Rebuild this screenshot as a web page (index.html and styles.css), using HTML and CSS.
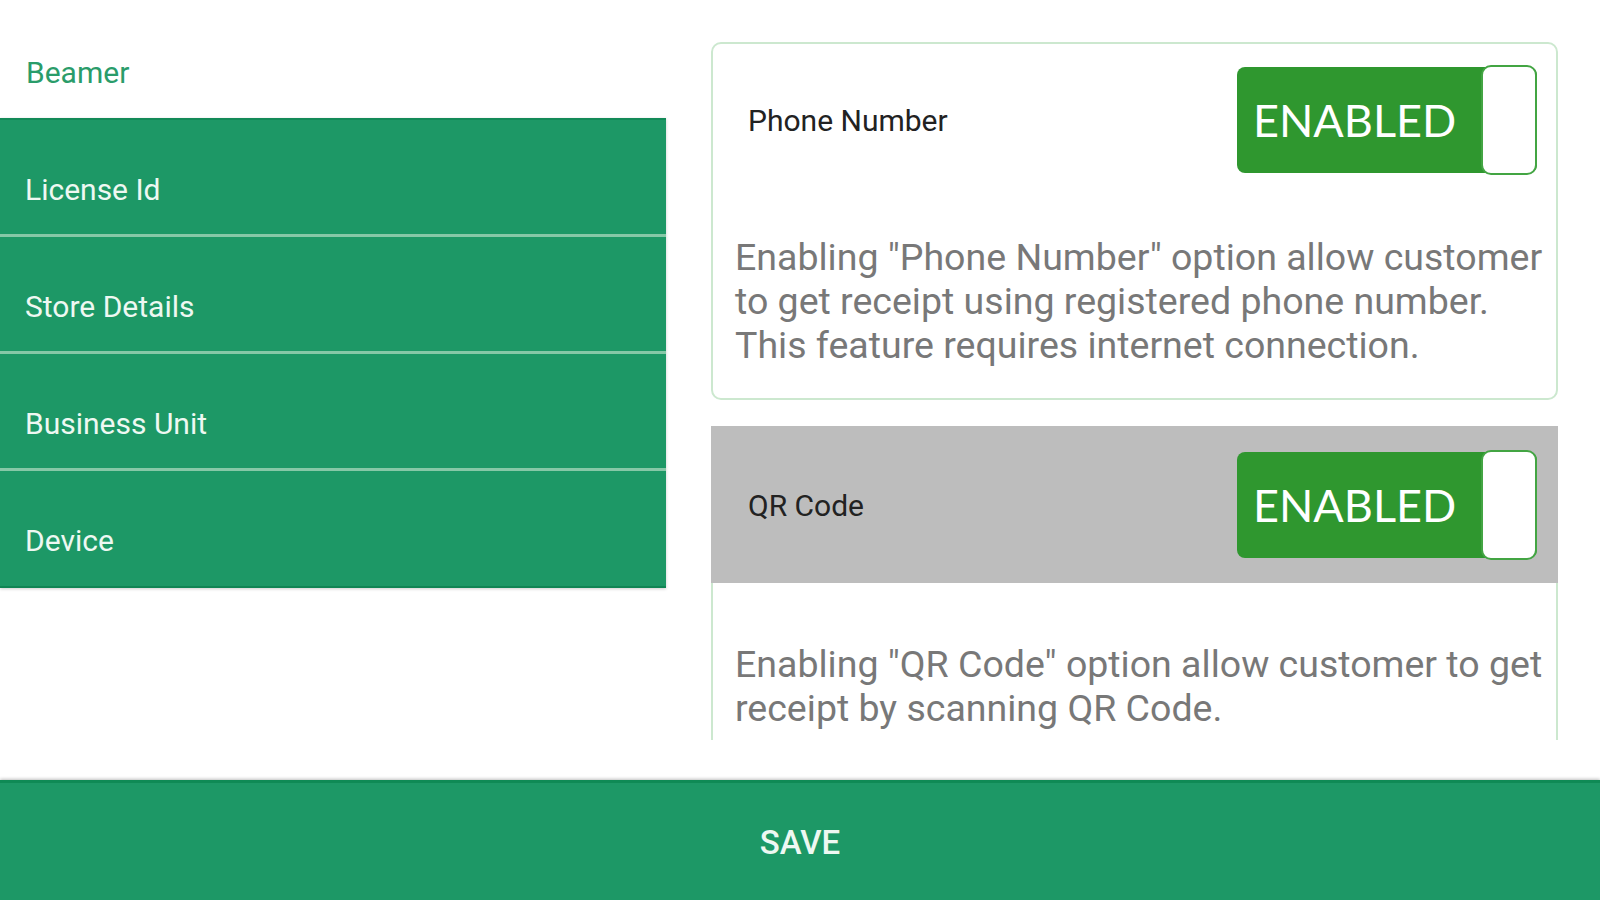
FILE: index.html
```html
<!DOCTYPE html>
<html lang="en">

<head>
  <meta charset="UTF-8" />
  <meta name="viewport" content="width=device-width, initial-scale=1.0" />
  <title>Beamer - Receipt Options</title>
  <link rel="stylesheet" href="styles.css">
</head>

<body>
  <div class="screen">
    <div class="main">
      <aside class="sidebar">
        <div class="brand">Beamer</div>
        <ul class="menu">
          <li>License Id</li>
          <li>Store Details</li>
          <li>Business Unit</li>
          <li>Device</li>
        </ul>
      </aside>

      <section class="options">
        <div class="option">
          <div class="option-head">
            <span class="option-name">Phone Number</span>
            <div class="toggle">
              <span class="toggle-label">ENABLED</span>
              <span class="toggle-knob"></span>
            </div>
          </div>
          <p class="option-desc">Enabling "Phone Number" option allow customer to get receipt using registered phone number. This feature requires internet connection.</p>
        </div>

        <div class="option option-active">
          <div class="option-head">
            <span class="option-name">QR Code</span>
            <div class="toggle">
              <span class="toggle-label">ENABLED</span>
              <span class="toggle-knob"></span>
            </div>
          </div>
          <p class="option-desc">Enabling "QR Code" option allow customer to get receipt by scanning QR Code.</p>
        </div>
      </section>
    </div>

    <footer class="save-bar">SAVE</footer>
  </div>
</body>

</html>
```

FILE: styles.css
```css
* {
  margin: 0;
  padding: 0;
  box-sizing: border-box;
}

html,
body {
  width: 1600px;
  height: 900px;
  overflow: hidden;
  background: #ffffff;
  font-family: Roboto, 'Noto Sans', sans-serif;
}

.screen {
  display: flex;
  flex-direction: column;
  height: 900px;
}

.main {
  display: flex;
  height: 780px;
}

/* left menu */

.sidebar {
  width: 666px;
  flex-shrink: 0;
}

.brand {
  height: 118px;
  padding: 55px 26px 0;
  font-size: 30px;
  line-height: 36px;
  color: #2a9c6a;
}

.menu {
  list-style: none;
  background-color: #1d9866;
  border-top: 2px solid #138a58;
  border-bottom: 2px solid #108554;
  box-shadow: 0 1px 3px rgba(0, 0, 0, 0.2);
}

.menu li {
  height: 117px;
  padding: 52px 25px 0;
  font-size: 30px;
  line-height: 36px;
  color: #eef8f2;
  border-bottom: 3px solid #86c8a7;
}

.menu li:last-child {
  height: 115px;
  border-bottom: none;
}

/* option cards */

.options {
  flex: 1;
  height: 740px;
  overflow: hidden;
  padding: 42px 42px 0 45px;
}

.option {
  border: 2px solid #cce8cf;
  border-radius: 10px;
  padding-bottom: 31px;
}

.option + .option {
  margin-top: 26px;
}

.option-head {
  display: flex;
  align-items: center;
  justify-content: space-between;
  padding: 23px 19px 0 35px;
}

.option-name {
  font-size: 30px;
  color: #222222;
}

.option-active .option-head {
  margin: -2px -2px 0;
  padding: 26px 21px 25px 37px;
  background-color: #bdbdbd;
}

.toggle {
  display: flex;
  width: 300px;
  height: 106px;
  background-color: #2f972f;
  border-radius: 8px;
}

.toggle-label {
  flex: 1;
  padding-left: 16px;
  font-family: Lato, 'Open Sans', sans-serif;
  font-size: 45px;
  line-height: 106px;
  color: #ffffff;
}

.toggle-knob {
  width: 56px;
  margin: -2px 0;
  background-color: #ffffff;
  border: 2px solid #43a543;
  border-radius: 10px;
}

.option-desc {
  margin-top: 62px;
  padding: 0 2px 0 22px;
  font-size: 37.5px;
  line-height: 44px;
  color: #787878;
}

.option-active .option-desc {
  margin-top: 59px;
}

/* bottom bar */

.save-bar {
  height: 120px;
  display: flex;
  align-items: center;
  justify-content: center;
  padding-top: 2px;
  background-color: #1d9866;
  border-top: 3px solid #0f8a55;
  box-shadow: 0 -1px 3px rgba(0, 0, 0, 0.25);
  font-size: 33px;
  font-weight: 500;
  color: #eef8f2;
}
```
